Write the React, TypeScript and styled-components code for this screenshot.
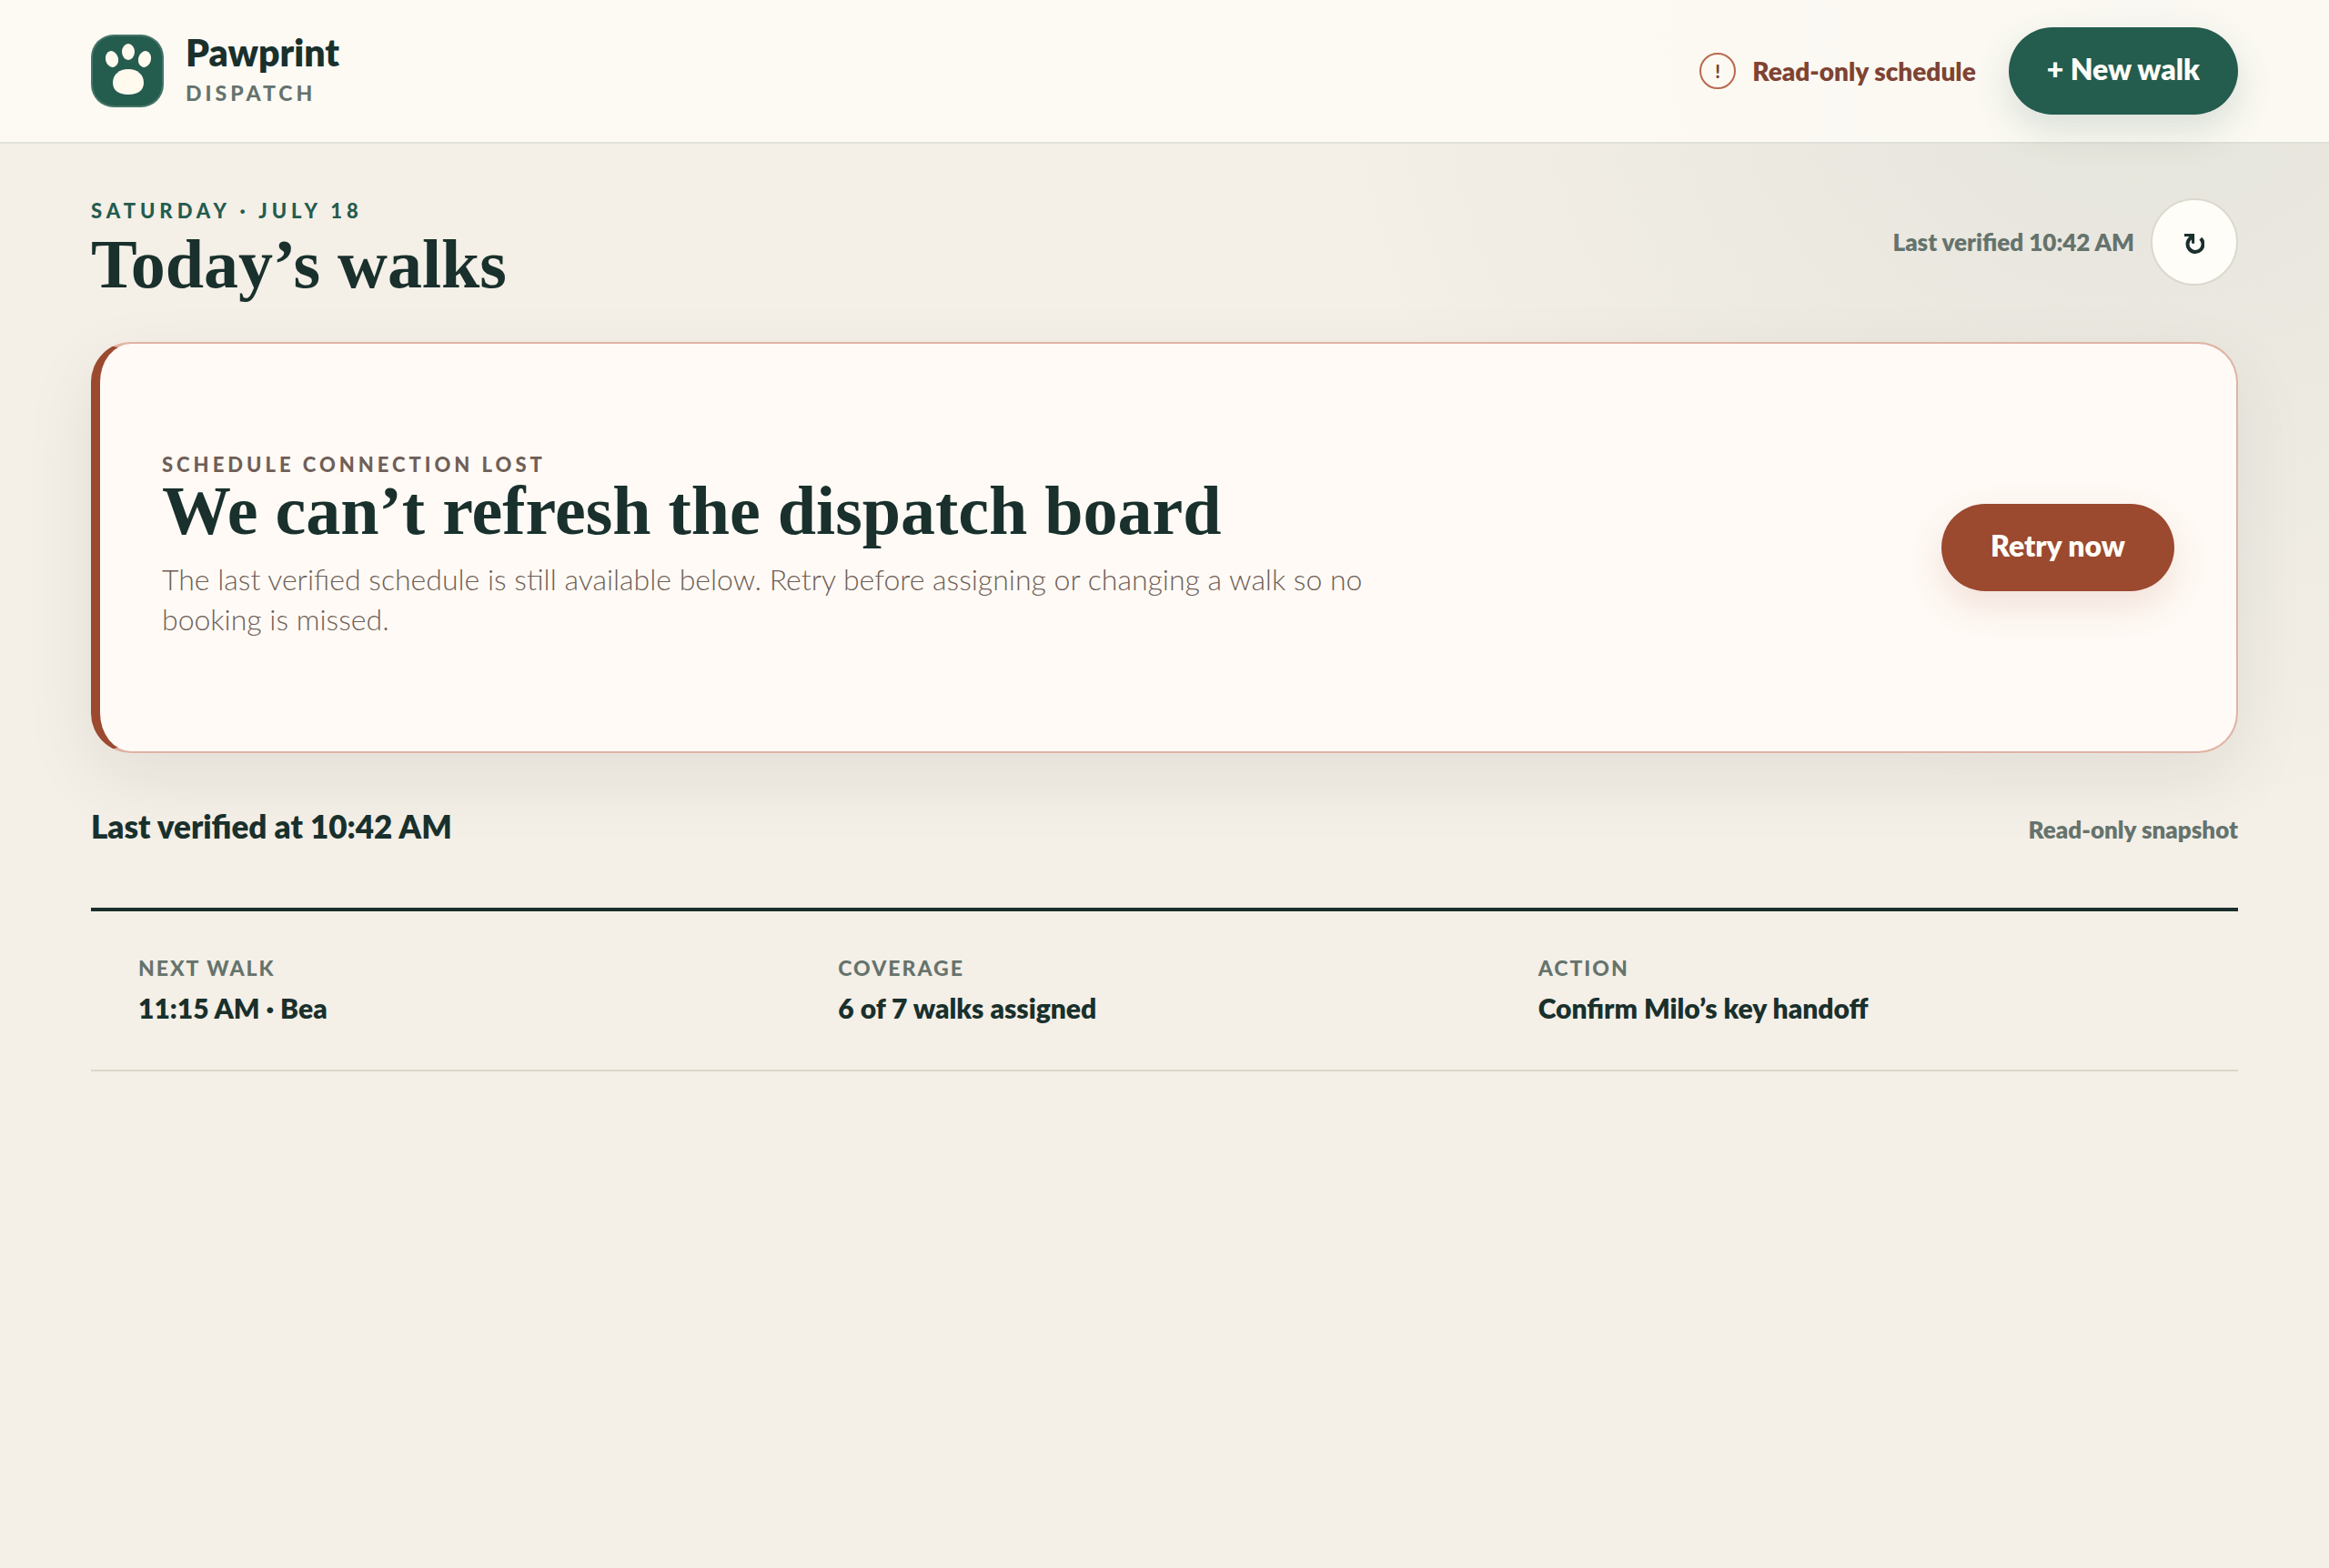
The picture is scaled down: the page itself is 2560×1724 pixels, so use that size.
import React from "react";
import styled, { createGlobalStyle } from "styled-components";

const sans = `Lato, "Liberation Sans", sans-serif`;
const serif = `"Liberation Serif", "Noto Serif", serif`;

const GlobalStyle = createGlobalStyle`
  *, *::before, *::after { box-sizing: border-box; }
  body {
    margin: 0;
    min-height: 100vh;
    color: #19302c;
    font-family: ${sans};
    background:
      radial-gradient(circle at 92% 0, rgba(36, 92, 78, 0.08), transparent 900px),
      #f4efe7;
  }
  h1, h2, h3, p, dl, dt, dd { margin: 0; }
  button { font: inherit; border: 0; cursor: pointer; }
`;

const Header = styled.header`
  display: flex;
  align-items: center;
  justify-content: space-between;
  min-height: 158px;
  padding: 0 100px;
  background: rgba(255, 253, 247, 0.82);
  border-bottom: 2px solid rgba(25, 48, 44, 0.12);
`;

const Brand = styled.div`
  display: flex;
  align-items: center;
  gap: 24px;
`;

const BrandMark = styled.svg`
  width: 80px;
  height: 80px;
`;

const BrandText = styled.div`
  padding-bottom: 6px;
`;

const BrandName = styled.div`
  font-size: 41px;
  line-height: 48px;
  font-weight: 800;
`;

const BrandUnit = styled.div`
  margin-top: 6px;
  color: #65736d;
  font-size: 23px;
  line-height: 28px;
  font-weight: 900;
  letter-spacing: 4px;
`;

const HeaderActions = styled.div`
  display: flex;
  align-items: center;
  gap: 36px;
`;

const Status = styled.div`
  display: flex;
  align-items: center;
  gap: 18px;
  color: #7f4332;
  font-size: 28px;
  line-height: 32px;
  font-weight: 800;
`;

const StatusMark = styled.span`
  display: grid;
  place-items: center;
  width: 40px;
  height: 40px;
  border: 2px solid #b9694f;
  border-radius: 50%;
  font-size: 20px;
  line-height: 24px;
  font-weight: 900;
`;

const PillButton = styled.button<{ $tone: "green" | "rust" }>`
  height: 96px;
  padding: 0 ${(p) => (p.$tone === "green" ? 42 : 54)}px 4px;
  flex: none;
  border-radius: 48px;
  color: #fffdf7;
  font-size: 32px;
  line-height: 36px;
  font-weight: 800;
  background: ${(p) => (p.$tone === "green" ? "#245c4e" : "#9b492f")};
  box-shadow: 0 16px 40px
    ${(p) => (p.$tone === "green" ? "rgba(36, 92, 78, 0.16)" : "rgba(155, 73, 47, 0.14)")};
`;

const Main = styled.main`
  padding: 60px 100px;
`;

const PageHead = styled.div`
  display: flex;
  align-items: flex-start;
  justify-content: space-between;
`;

const Eyebrow = styled.p<{ $tone: "green" | "brown" }>`
  color: ${(p) => (p.$tone === "green" ? "#245c4e" : "#6f5f58")};
  font-size: 22px;
  line-height: 28px;
  font-weight: 900;
  letter-spacing: ${(p) => (p.$tone === "green" ? 5 : 4)}px;
`;

const Title = styled.h1`
  font-family: ${serif};
  font-size: 76px;
  line-height: 72px;
  font-weight: 700;
`;

const PageTitle = styled(Title)`
  margin-top: 8px;
`;

const Verified = styled.div`
  display: flex;
  align-items: center;
  gap: 18px;
`;

const Note = styled.span`
  color: #65736d;
  font-size: 26px;
  line-height: 30px;
  font-weight: 800;
`;

const RefreshButton = styled.button`
  display: grid;
  place-items: center;
  width: 96px;
  height: 96px;
  padding: 0;
  color: #19302c;
  background: #fffdf8;
  border: 2px solid #dcd8ce;
  border-radius: 50%;

  svg {
    width: 22px;
    height: 26px;
  }
`;

const Alert = styled.section`
  display: flex;
  align-items: center;
  justify-content: space-between;
  gap: 60px;
  min-height: 452px;
  margin-top: 50px;
  padding: 60px 68px;
  background: #fffaf5;
  border: 2px solid #e0b3a5;
  border-left: 10px solid #9b492f;
  border-radius: 44px;
  box-shadow: 0 28px 80px rgba(25, 48, 44, 0.08);
`;

const AlertCopy = styled.div`
  max-width: 1360px;
  padding-bottom: 4px;
`;

const AlertText = styled.p`
  margin-top: 18px;
  color: #6f5f58;
  font-size: 32px;
  line-height: 44px;
  font-weight: 300;
`;

const SnapshotHead = styled.div`
  display: flex;
  align-items: baseline;
  justify-content: space-between;
  margin: 56px 0 66px;
`;

const SnapshotTitle = styled.h3`
  font-size: 35px;
  line-height: 48px;
  font-weight: 800;
`;

const Facts = styled.dl`
  display: grid;
  grid-template-columns: repeat(3, 1fr);
  gap: 52px;
  padding: 48px 52px;
  border-top: 4px solid #19302c;
  border-bottom: 2px solid #dcd8cb;
`;

const FactLabel = styled.dt`
  color: #65736d;
  font-size: 23px;
  line-height: 28px;
  font-weight: 900;
  letter-spacing: 2px;
`;

const FactValue = styled.dd`
  margin-top: 10px;
  font-size: 30px;
  line-height: 40px;
  font-weight: 800;
`;

const facts = [
  { label: "NEXT WALK", value: "11:15 AM · Bea" },
  { label: "COVERAGE", value: "6 of 7 walks assigned" },
  { label: "ACTION", value: "Confirm Milo’s key handoff" },
];

function PawMark() {
  return (
    <BrandMark viewBox="0 0 80 80" aria-hidden="true">
      <rect width="80" height="80" rx="25" fill="#467568" />
      <rect x="2" y="2" width="76" height="76" rx="23" fill="#245c4e" />
      <g fill="#fff9ee">
        <ellipse cx="23" cy="27" rx="7" ry="9" transform="rotate(-14 23 27)" />
        <ellipse cx="41" cy="19" rx="7" ry="9" />
        <ellipse cx="59" cy="27" rx="7" ry="9" transform="rotate(14 59 27)" />
        <path d="M41 38c10 0 17 6 17 15 0 8-6 13-17 13s-17-5-17-13c0-9 7-15 17-15Z" />
      </g>
    </BrandMark>
  );
}

function RefreshIcon() {
  return (
    <svg viewBox="0 0 22 26" aria-hidden="true" fill="none" stroke="currentColor">
      <path d="M17.800 9.200A8.500 8.500 0 1 1 7 8.600" strokeWidth="4" />
      <path d="M0 5.400H9.600V14.800" strokeWidth="3" />
      <path d="M3 5.500H9.500V12Z" fill="currentColor" stroke="none" />
    </svg>
  );
}

export default function App() {
  return (
    <>
      <GlobalStyle />
      <Header>
        <Brand>
          <PawMark />
          <BrandText>
            <BrandName>Pawprint</BrandName>
            <BrandUnit>DISPATCH</BrandUnit>
          </BrandText>
        </Brand>
        <HeaderActions>
          <Status role="status">
            <StatusMark>!</StatusMark>
            Read-only schedule
          </Status>
          <PillButton type="button" $tone="green">+ New walk</PillButton>
        </HeaderActions>
      </Header>
      <Main>
        <PageHead>
          <div>
            <Eyebrow $tone="green">SATURDAY · JULY 18</Eyebrow>
            <PageTitle>Today’s walks</PageTitle>
          </div>
          <Verified>
            <Note>Last verified 10:42 AM</Note>
            <RefreshButton type="button" aria-label="Refresh schedule">
              <RefreshIcon />
            </RefreshButton>
          </Verified>
        </PageHead>
        <Alert>
          <AlertCopy>
            <Eyebrow $tone="brown">SCHEDULE CONNECTION LOST</Eyebrow>
            <Title as="h2">We can’t refresh the dispatch board</Title>
            <AlertText>
              The last verified schedule is still available below. Retry before assigning or changing a walk so no
              booking is missed.
            </AlertText>
          </AlertCopy>
          <PillButton type="button" $tone="rust">Retry now</PillButton>
        </Alert>
        <SnapshotHead>
          <SnapshotTitle>Last verified at 10:42 AM</SnapshotTitle>
          <Note>Read-only snapshot</Note>
        </SnapshotHead>
        <Facts>
          {facts.map((fact) => (
            <div key={fact.label}>
              <FactLabel>{fact.label}</FactLabel>
              <FactValue>{fact.value}</FactValue>
            </div>
          ))}
        </Facts>
      </Main>
    </>
  );
}
